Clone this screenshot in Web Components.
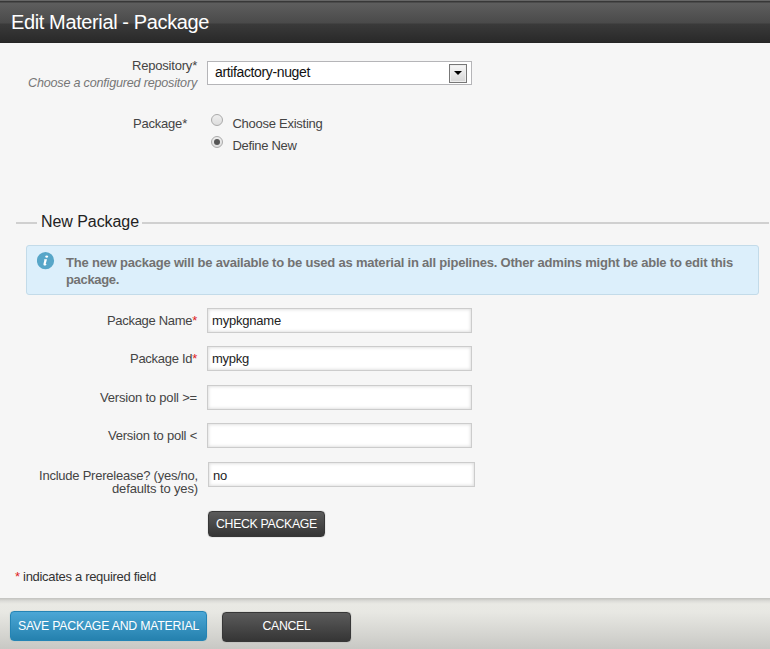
<!DOCTYPE html>
<html lang="en"><head><meta charset="utf-8"><title>Edit Material - Package</title>
<style>
html,body{margin:0;height:100%;overflow:hidden}
body{font:13px/16px "Liberation Sans",Arial,sans-serif;color:#444;background:#f6f6f6}
</style></head><body>
<material-dialog></material-dialog>
<script>
const define=(name,html,init)=>{
  const t=document.createElement('template');t.innerHTML=html;
  customElements.define(name,class extends HTMLElement{
    connectedCallback(){
      if(this.shadowRoot)return;
      this.attachShadow({mode:'open'}).append(t.content.cloneNode(true));
      if(init)init.call(this,this.shadowRoot);
    }
  });
};

/* Text whose tracking is adjusted so that the line is exactly "w" pixels wide. */
define('fit-text','<style>:host{display:inline-block;white-space:pre}span{display:inline-block}</style><span><slot></slot></span>',function(r){
  const s=r.querySelector('span'),w=+this.getAttribute('w'),n=this.textContent.length;
  const ls=(w-s.getBoundingClientRect().width)/n;
  s.style.letterSpacing=ls.toFixed(4)+'px';
});

define('title-bar',`<style>:host{display:block;box-sizing:border-box;height:43px;padding:9px 0 0 11px;border-top:1px solid #666;
 background:linear-gradient(#383838 0,#383838 1px,#5e5e5e 2px,#4a4a4a 22px,#3a3a3a 23px,#292929 41px,#222 42px);
 color:#fff;font-size:20px;line-height:24px}</style><slot></slot>`);

define('form-row',`<style>:host{display:grid;grid-template-columns:197px auto;column-gap:10px;align-items:start;justify-content:start;height:var(--h,38px)}
 .l{text-align:right;padding-top:var(--lt,5px);line-height:var(--lh,16px)}
 :host([wide]){grid-template-columns:198px auto}
 ::slotted([slot=label]){display:block}</style><div class="l"><slot name="label"></slot></div><slot></slot>`);

define('text-field',`<style>:host{display:block;box-sizing:border-box;width:265px;height:25px;border:1px solid #ccc;outline:0;background:#fff;
 box-shadow:inset 0 0 3px 1px #e2e2e2;padding:4px 0 0 4px;color:#222}</style><slot></slot>`);

define('select-box',`<style>:host{display:flex;justify-content:space-between;box-sizing:border-box;width:265px;height:24px;border:1px solid #b5b5b8;background:#fff;
 padding:2px 4px 1px 7px;color:#111;font-size:14px;line-height:17px}
 i{box-sizing:border-box;width:18px;height:19px;margin-top:-.5px;border:1px solid #777;background:linear-gradient(#f8f8f8,#d6d6d6);display:flex;justify-content:center;align-items:center;box-shadow:inset 0 0 0 1px #eee}</style>
 <slot></slot><i><svg width="8" height="4" viewBox="0 0 8 4"><path d="M0 0H8L4 4Z" fill="#000"/></svg></i>`);

define('radio-option',`<style>:host{display:flex;align-items:flex-start;height:22px;padding-left:4px}
 i{box-sizing:border-box;width:12px;height:12px;border:1px solid #aaa;border-radius:50%;background:linear-gradient(#eee,#ddd);margin-right:9.5px;display:flex;align-items:center;justify-content:center}
 :host([checked]) i::before{content:"";width:6px;height:6px;border-radius:50%;background:#555}
 div{padding-top:2px}</style><i></i><div><slot></slot></div>`);

define('section-legend',`<style>:host{display:grid;grid-template-columns:21px auto 1fr;align-items:center;margin:0 1px 0 16px;height:20px;color:#222;font-size:16px;line-height:20px}
 hr{margin:2px 0 0;border:0;height:2px;background:#d0d0d0}div{padding:0 3px 0 4px}</style><hr><div><slot></slot></div><hr>`);

define('info-box',`<style>:host{display:flex;box-sizing:border-box;margin:13px 11px 0 26px;height:50px;border:1px solid #c3dbe9;border-radius:3px;background:#dceffb;
 padding:6px 0 0 10px;color:#727272;font-weight:bold;line-height:17px}
 svg{flex:none;margin-right:11px}div{padding-top:2px}::slotted(fit-text){display:block!important}</style>
 <svg width="18" height="18" viewBox="0 0 18 18"><circle cx="8.5" cy="8.7" r="8.6" fill="#57a6c8"/><g fill="#fff"><ellipse cx="9.7" cy="4.6" rx="1.4" ry="1.2"/><path d="M7.6 7.2H10L8.7 12.1L9.6 12.2L9.2 13Q8.2 13.7 7.1 13.5Q6.2 13.2 6.5 11.8L7.4 8.2L6.8 8.1Z"/></g></svg><div><slot></slot></div>`);

define('push-button',`<style>:host{display:flex;justify-content:center;box-sizing:border-box;width:var(--w);height:var(--h,26px);padding-top:var(--pt,4px);border:1px solid #373737;border-radius:4px;
 background:linear-gradient(#5b5b5b,#353535);color:#fff;font-size:12.3px;box-shadow:0 0 1px #777}
 :host([primary]){border-color:#2484b5;background:linear-gradient(#4ba7d6,#2581ae);box-shadow:0 0 1px #8bb}</style><slot></slot>`);

define('action-bar',`<style>:host{display:flex;align-items:flex-start;box-sizing:border-box;height:51px;padding:13px 0 0 10px;
 background:linear-gradient(#c3c3c0 0,#c9c9c6 1px,#dcdcd8 3px,#e9e9e4 6px,#e8e8e3 14px,#c8c8c4 51px)}
 ::slotted(.second){margin:1px 0 0 15px}</style><slot></slot>`);

define('material-dialog',`<style>:host{display:block;width:770px;height:649px;background:#f6f6f6}
 main{display:block;box-sizing:border-box;height:555px;padding-top:18px}
 .hint{font-style:italic;font-size:12.6px;color:#777;line-height:17px;padding-top:1px}
 b{font-weight:normal;color:#d22}
 .fields{margin-top:13px}
 section-legend{margin-top:1px}
 .note{margin:32px 0 0 15px;color:#333}
 </style>
 <title-bar><fit-text w="198">Edit Material - Package</fit-text></title-bar>
 <main>
 <form-row style="--h:55px;--lt:0px;margin-top:-3px">
  <div slot="label"><fit-text w="65">Repository*</fit-text></div>
  <div slot="label" class="hint"><fit-text w="169">Choose a configured repository</fit-text></div>
  <select-box style="margin-top:3px"><fit-text w="95">artifactory-nuget</fit-text></select-box>
 </form-row>
 <form-row style="--h:98px;--lt:3px">
  <div slot="label" style="padding-right:10px"><fit-text w="54">Package*</fit-text></div>
  <div style="padding-top:1px"><radio-option><fit-text w="90">Choose Existing</fit-text></radio-option>
  <radio-option checked><fit-text w="64">Define New</fit-text></radio-option></div>
 </form-row>
 <section-legend><fit-text w="98">New Package</fit-text></section-legend>
 <info-box><fit-text w="667">The new package will be available to be used as material in all pipelines. Other admins might be able to edit this</fit-text><fit-text w="53">package.</fit-text></info-box>
 <div class="fields">
 <form-row><div slot="label"><fit-text w="90">Package Name<b>*</b></fit-text></div><text-field><fit-text w="69">mypkgname</fit-text></text-field></form-row>
 <form-row style="--h:39px"><div slot="label"><fit-text w="67">Package Id<b>*</b></fit-text></div><text-field><fit-text w="37">mypkg</fit-text></text-field></form-row>
 <form-row><div slot="label"><fit-text w="97">Version to poll &gt;=</fit-text></div><text-field></text-field></form-row>
 <form-row style="--h:39px"><div slot="label"><fit-text w="89">Version to poll &lt;</fit-text></div><text-field></text-field></form-row>
 <form-row wide style="--h:49px;--lt:7px;--lh:13px"><div slot="label"><fit-text w="159">Include Prerelease? (yes/no,</fit-text></div><div slot="label"><fit-text w="86">defaults to yes)</fit-text></div><text-field style="width:267px;padding-top:5px"><fit-text w="14">no</fit-text></text-field></form-row>
 <form-row wide style="--h:26px"><push-button style="--w:117px"><fit-text w="101">CHECK PACKAGE</fit-text></push-button></form-row>
 </div>
 <div class="note"><fit-text w="141"><b>*</b> indicates a required field</fit-text></div>
 </main>
 <action-bar><push-button primary style="--w:197px;--h:30px;--pt:6px"><fit-text w="181">SAVE PACKAGE AND MATERIAL</fit-text></push-button><push-button class="second" style="--w:129px;--h:30px;--pt:5px"><fit-text w="48">CANCEL</fit-text></push-button></action-bar>`);
</script></body></html>
